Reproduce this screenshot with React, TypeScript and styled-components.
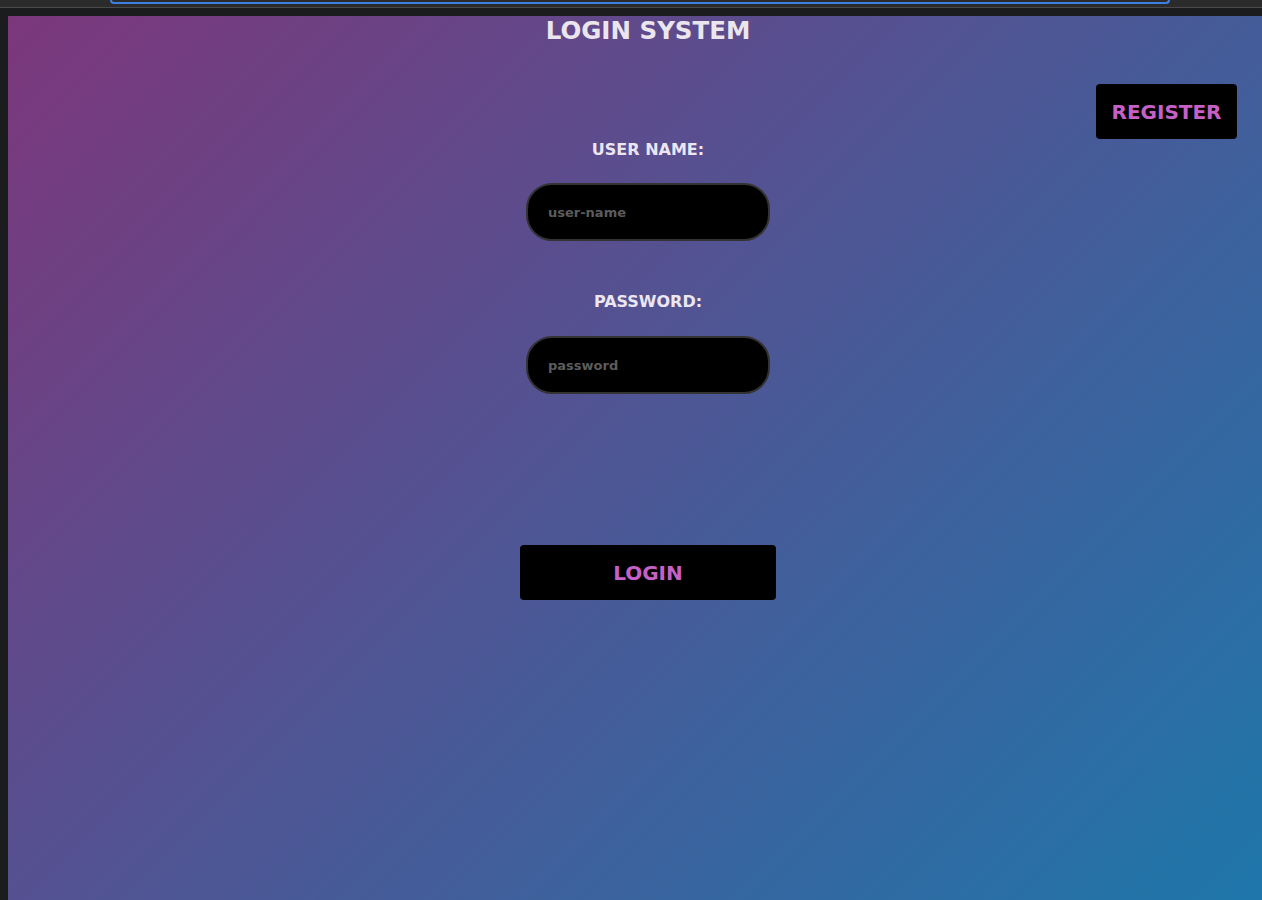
import React from "react";
import styled, { createGlobalStyle } from "styled-components";

const Global = createGlobalStyle`
  html, body { margin: 0; padding: 0; background: #1b1c1d; overflow: hidden; }
  body { font-family: "DejaVu Sans", Verdana, sans-serif; }
  * { box-sizing: border-box; }
`;

const Chrome = styled.div`
  height: 8px;
  background: #2b2b2b;
  border-bottom: 1px solid #4a4a4a;
  display: flex;
  padding-left: 110px;
`;

const AddressEdge = styled.div`
  width: 1060px;
  height: 4px;
  border: 2px solid #3d7fe3;
  border-top: none;
  border-radius: 0 0 10px 10px;
`;

const Page = styled.main`
  margin: 8px 0 0 8px;
  width: 1280px;
  height: 900px;
  background: linear-gradient(135deg, #7c377b 0%, #4c5796 50%, #1c78ab 100%);
  display: flex;
  flex-direction: column;
  align-items: center;
`;

const Title = styled.h1`
  margin: 0;
  font-size: 24.5px;
  line-height: 30px;
  font-weight: bold;
  color: #ebe6ee;
`;

const TopRow = styled.div`
  align-self: stretch;
  display: flex;
  justify-content: flex-end;
  padding-right: 51px;
  margin-top: 38px;
`;

const ActionButton = styled.button<{ $wide?: boolean }>`
  background: #000;
  border: none;
  border-radius: 4px;
  color: #c760c6;
  font-family: "DejaVu Sans", Verdana, sans-serif;
  font-weight: bold;
  font-size: 20px;
  height: 55px;
  width: ${(p) => (p.$wide ? "256px" : "141px")};
  padding: 0;
  cursor: pointer;
`;

const Form = styled.form`
  display: flex;
  flex-direction: column;
  align-items: center;
`;

const Label = styled.label<{ $top: number }>`
  margin-top: ${(p) => p.$top}px;
  font-size: 16px;
  line-height: 20px;
  font-weight: bold;
  color: #ece6f2;
`;

const Input = styled.input<{ $top: number }>`
  margin-top: ${(p) => p.$top}px;
  width: 244px;
  height: 58px;
  background: #000;
  border: 2px solid #333;
  border-radius: 26px;
  padding: 0 20px;
  color: #ddd;
  font-family: "DejaVu Sans", Verdana, sans-serif;
  font-weight: bold;
  font-size: 13px;
  outline: none;
  &::placeholder { color: #5c5c5c; }
`;

const SubmitWrap = styled.div`
  margin-top: 151px;
`;

export default function App() {
  return (
    <>
      <Global />
      <Chrome>
        <AddressEdge />
      </Chrome>
      <Page>
        <Title>LOGIN SYSTEM</Title>
        <TopRow>
          <ActionButton type="button">REGISTER</ActionButton>
        </TopRow>
        <Form onSubmit={(e) => e.preventDefault()}>
          <Label $top={1} htmlFor="u">USER NAME:</Label>
          <Input $top={23} id="u" placeholder="user-name" />
          <Label $top={51} htmlFor="p">PASSWORD:</Label>
          <Input $top={24} id="p" type="password" placeholder="password" />
          <SubmitWrap>
            <ActionButton $wide type="submit">LOGIN</ActionButton>
          </SubmitWrap>
        </Form>
      </Page>
    </>
  );
}
